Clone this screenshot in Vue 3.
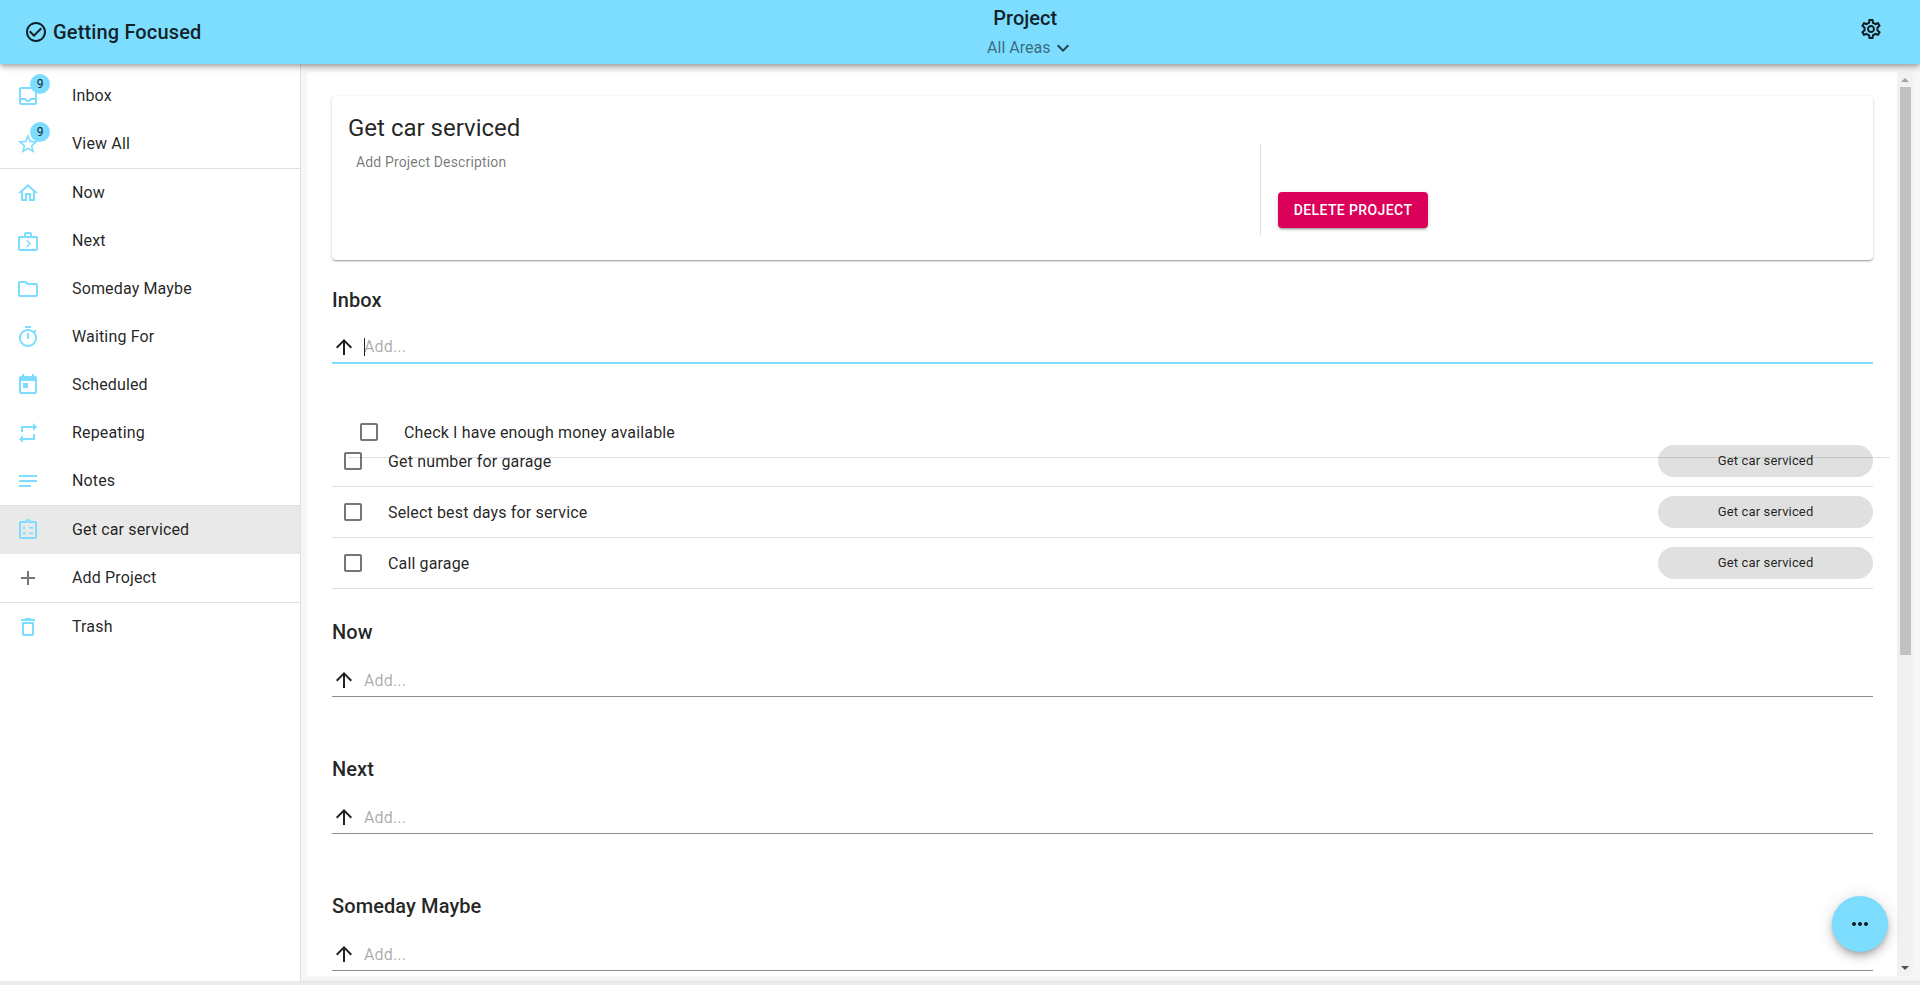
<script setup>
const navTop = [
  { label: 'Inbox', badge: 9, icon: 'M19 3H5c-1.1 0-2 .9-2 2v14c0 1.1.9 2 2 2h14c1.1 0 2-.9 2-2V5c0-1.1-.9-2-2-2zm0 16H5v-3h3.56c.69 1.19 1.97 2 3.45 2s2.75-.81 3.44-2H19v3zm0-5h-4.99c0 1.1-.9 2-2 2s-2-.9-2-2H5V5h14v9z' },
  { label: 'View All', badge: 9, icon: 'M22 9.24l-7.19-.62L12 2 9.19 8.63 2 9.24l5.46 4.73L5.82 21 12 17.27 18.18 21l-1.63-7.03L22 9.24zM12 15.4l-3.76 2.27 1-4.28-3.32-2.88 4.38-.38L12 6.1l1.71 4.04 4.38.38-3.32 2.88 1 4.28L12 15.4z' },
]
const navMid = [
  { label: 'Now', icon: 'M12 5.69l5 4.5V18h-2v-6H9v6H7v-7.81l5-4.5M12 3L2 12h3v8h6v-6h2v6h6v-8h3L12 3z' },
  { label: 'Next', icon: 'M20 7h-4V5c0-.55-.22-1.05-.59-1.41C15.05 3.22 14.55 3 14 3h-4c-1.1 0-2 .9-2 2v2H4c-1.1 0-2 .9-2 2v11c0 1.1.9 2 2 2h16c1.1 0 2-.9 2-2V9c0-1.1-.9-2-2-2zM10 5h4v2h-4V5zm10 15H4V9h16v11zM11 18.5l4-4-4-4-1 1 3 3-3 3z' },
  { label: 'Someday Maybe', icon: 'M9.17 6l2 2H20v10H4V6h5.17M10 4H4c-1.1 0-1.99.9-1.99 2L2 18c0 1.1.9 2 2 2h16c1.1 0 2-.9 2-2V8c0-1.1-.9-2-2-2h-8l-2-2z' },
  { label: 'Waiting For', icon: 'M15 1H9v2h6V1zm-4 13h2V8h-2v6zm8.03-6.61l1.42-1.42c-.43-.51-.9-.99-1.41-1.41l-1.42 1.42C16.07 4.74 14.12 4 12 4c-4.97 0-9 4.03-9 9s4.02 9 9 9 9-4.03 9-9c0-2.12-.74-4.07-1.97-5.61zM12 20c-3.87 0-7-3.13-7-7s3.13-7 7-7 7 3.13 7 7-3.13 7-7 7z' },
  { label: 'Scheduled', icon: 'M19 3h-1V1h-2v2H8V1H6v2H5c-1.11 0-1.99.9-1.99 2L3 19c0 1.1.89 2 2 2h14c1.1 0 2-.9 2-2V5c0-1.1-.9-2-2-2zm0 16H5V8h14v11zM7 10h5v5H7z' },
  { label: 'Repeating', icon: 'M7 7h10v3l4-4-4-4v3H5v6h2V7zm10 10H7v-3l-4 4 4 4v-3h12v-6h-2v4z' },
  { label: 'Notes', icon: 'M3 18h12v-2H3v2zM3 6v2h18V6H3zm0 7h18v-2H3v2z' },
]
const clipboard = 'M19 3h-4.18C14.4 1.84 13.3 1 12 1s-2.4.84-2.82 2H5c-1.1 0-2 .9-2 2v14c0 1.1.9 2 2 2h14c1.1 0 2-.9 2-2V5c0-1.1-.9-2-2-2zm-7-.25c.41 0 .75.34.75.75s-.34.75-.75.75-.75-.34-.75-.75.34-.75.75-.75zM19 19H5V5h14v14zM13 9h4v1.5h-4zM13 14.5h4V16h-4zM7.5 8h1.2v3.5H7.5zM7 14h2.6v.9H8v.6h1.6v.9H7z'
const addIcon = 'M19 13h-6v6h-2v-6H5v-2h6V5h2v6h6v2z'
const trashIcon = 'M6 19c0 1.1.9 2 2 2h8c1.1 0 2-.9 2-2V7H6v12zM8 9h8v10H8V9zm7.5-5l-1-1h-5l-1 1H5v2h14V4z'
const checkbox = 'M19 5v14H5V5h14m0-2H5c-1.1 0-2 .9-2 2v14c0 1.1.9 2 2 2h14c1.1 0 2-.9 2-2V5c0-1.1-.9-2-2-2z'
const arrowUp = 'M4 12l1.41 1.41L11 7.83V20h2V7.83l5.58 5.59L20 12l-8-8-8 8z'
const tasks = ['Get number for garage', 'Select best days for service', 'Call garage']
const otherSections = ['Now', 'Next', 'Someday Maybe']
</script>

<template>
  <div class="app">
    <header class="topbar">
      <div class="brand">
        <svg class="brand-icon" viewBox="0 0 24 24"><path d="M16.59 7.58L10 14.17l-3.59-3.58L5 12l5 5 8-8zM12 2C6.48 2 2 6.48 2 12s4.48 10 10 10 10-4.48 10-10S17.52 2 12 2zm0 18c-4.42 0-8-3.58-8-8s3.58-8 8-8 8 3.58 8 8-3.58 8-8 8z" /></svg>
        <span>Getting Focused</span>
      </div>
      <div class="title-block">
        <div class="page-title">Project</div>
        <div class="area">All Areas<svg viewBox="0 0 24 24"><path d="M16.59 8.59L12 13.17 7.41 8.59 6 10l6 6 6-6z" /></svg></div>
      </div>
      <svg class="gear" viewBox="0 0 24 24"><path d="M19.43 12.98c.04-.32.07-.64.07-.98 0-.34-.03-.66-.07-.98l2.11-1.65c.19-.15.24-.42.12-.64l-2-3.46c-.09-.16-.26-.25-.44-.25-.06 0-.12.01-.17.03l-2.49 1c-.52-.4-1.08-.73-1.69-.98l-.38-2.65C14.46 2.18 14.25 2 14 2h-4c-.25 0-.46.18-.49.42l-.38 2.65c-.61.25-1.17.59-1.69.98l-2.49-1c-.06-.02-.12-.03-.18-.03-.17 0-.34.09-.43.25l-2 3.46c-.13.22-.07.49.12.64l2.11 1.65c-.04.32-.07.65-.07.98 0 .33.03.66.07.98l-2.11 1.65c-.19.15-.24.42-.12.64l2 3.46c.09.16.26.25.44.25.06 0 .12-.01.17-.03l2.49-1c.52.4 1.08.73 1.69.98l.38 2.65c.03.24.24.42.49.42h4c.25 0 .46-.18.49-.42l.38-2.65c.61-.25 1.17-.59 1.69-.98l2.49 1c.06.02.12.03.18.03.17 0 .34-.09.43-.25l2-3.46c.12-.22.07-.49-.12-.64l-2.11-1.65zm-1.98-1.71c.04.31.05.52.05.73 0 .21-.02.43-.05.73l-.14 1.13.89.7 1.08.84-.7 1.21-1.27-.51-1.04-.42-.9.68c-.43.32-.84.56-1.25.73l-1.06.43-.16 1.13-.2 1.35h-1.4l-.19-1.35-.16-1.13-1.06-.43c-.43-.18-.83-.41-1.23-.71l-.91-.7-1.06.43-1.27.51-.7-1.21 1.08-.84.89-.7-.14-1.13c-.03-.31-.05-.54-.05-.74s.02-.43.05-.73l.14-1.13-.89-.7-1.08-.84.7-1.21 1.27.51 1.04.42.9-.68c.43-.32.84-.56 1.25-.73l1.06-.43.16-1.13.2-1.35h1.39l.19 1.35.16 1.13 1.06.43c.43.18.83.41 1.23.71l.91.7 1.06-.43 1.27-.51.7 1.21-1.07.85-.89.7.14 1.13zM12 8c-2.21 0-4 1.79-4 4s1.79 4 4 4 4-1.79 4-4-1.79-4-4-4zm0 6c-1.1 0-2-.9-2-2s.9-2 2-2 2 .9 2 2-.9 2-2 2z" /></svg>
    </header>

    <div class="body">
      <aside class="sidebar">
        <nav class="nav-group">
          <div v-for="item in navTop" :key="item.label" class="nav-item">
            <span class="nav-icon">
              <svg viewBox="0 0 24 24"><path :d="item.icon" /></svg>
              <span class="badge">{{ item.badge }}</span>
            </span>
            <span class="nav-label">{{ item.label }}</span>
          </div>
        </nav>
        <nav class="nav-group">
          <div v-for="item in navMid" :key="item.label" class="nav-item">
            <span class="nav-icon"><svg viewBox="0 0 24 24"><path :d="item.icon" /></svg></span>
            <span class="nav-label">{{ item.label }}</span>
          </div>
        </nav>
        <nav class="nav-group">
          <div class="nav-item selected">
            <span class="nav-icon"><svg viewBox="0 0 24 24"><path :d="clipboard" /></svg></span>
            <span class="nav-label">Get car serviced</span>
          </div>
          <div class="nav-item">
            <span class="nav-icon grey"><svg viewBox="0 0 24 24"><path :d="addIcon" /></svg></span>
            <span class="nav-label">Add Project</span>
          </div>
        </nav>
        <nav class="nav-group">
          <div class="nav-item">
            <span class="nav-icon"><svg viewBox="0 0 24 24"><path :d="trashIcon" /></svg></span>
            <span class="nav-label">Trash</span>
          </div>
        </nav>
      </aside>

      <main class="panel">
        <div class="content">
          <section class="card">
            <div class="card-left">
              <h1>Get car serviced</h1>
              <p>Add Project Description</p>
            </div>
            <div class="card-right">
              <button class="delete">DELETE PROJECT</button>
            </div>
          </section>

          <section class="section inbox">
            <h2>Inbox</h2>
            <div class="add-row focused">
              <svg viewBox="0 0 24 24"><path :d="arrowUp" /></svg>
              <span class="caret"></span><span class="placeholder">Add...</span>
            </div>
            <div class="subtask">
              <svg viewBox="0 0 24 24"><path :d="checkbox" /></svg>
              <span>Check I have enough money available</span>
            </div>
            <div v-for="task in tasks" :key="task" class="task">
              <svg viewBox="0 0 24 24"><path :d="checkbox" /></svg>
              <span class="task-text">{{ task }}</span>
              <span class="chip">Get car serviced</span>
            </div>
          </section>

          <section v-for="name in otherSections" :key="name" class="section">
            <h2>{{ name }}</h2>
            <div class="add-row">
              <svg viewBox="0 0 24 24"><path :d="arrowUp" /></svg>
              <span class="placeholder">Add...</span>
            </div>
          </section>
        </div>
        <div class="scrollbar">
          <span class="tri up"></span>
          <div class="thumb"></div>
          <span class="tri down"></span>
        </div>
      </main>
    </div>
    <div class="bottom-edge"></div>

    <button class="fab">
      <svg viewBox="0 0 24 24"><path d="M6 10c-1.1 0-2 .9-2 2s.9 2 2 2 2-.9 2-2-.9-2-2-2zm12 0c-1.1 0-2 .9-2 2s.9 2 2 2 2-.9 2-2-.9-2-2-2zm-6 0c-1.1 0-2 .9-2 2s.9 2 2 2 2-.9 2-2-.9-2-2-2z" /></svg>
    </button>
  </div>
</template>

<style scoped>
.app {
  position: relative;
  display: flex;
  flex-direction: column;
  width: 1920px;
  height: 985px;
  overflow: hidden;
  background: #f6f6f6;
  font-family: Roboto, "Liberation Sans", sans-serif;
  letter-spacing: .15px;
  color: rgba(0, 0, 0, 0.87);
}
.topbar {
  position: relative;
  z-index: 3;
  flex: none;
  display: flex;
  align-items: center;
  height: 64px;
  padding: 0 37px 0 24px;
  box-sizing: border-box;
  background: #7cddff;
  box-shadow: 0 2px 4px -1px rgba(0,0,0,.2), 0 4px 5px rgba(0,0,0,.14), 0 1px 10px rgba(0,0,0,.12);
}
.brand {
  display: flex;
  align-items: center;
  gap: 5px;
  font-size: 20px;
  font-weight: 500;
}
.brand-icon { width: 24px; height: 24px; fill: rgba(0,0,0,.87); }
.title-block { flex: 1; margin-right: 10px; text-align: center; letter-spacing: 0; }
.page-title { font-size: 20px; font-weight: 500; line-height: 24px; margin-top: 1px; }
.area {
  display: flex;
  align-items: center;
  justify-content: center;
  font-size: 16px;
  line-height: 24px;
  margin-top: 6px;
  color: rgba(0,0,0,.54);
}
.area svg { width: 24px; height: 24px; margin: 0 -12px 0 1px; fill: rgba(0,0,0,.7); }
.gear { flex: none; width: 24px; height: 24px; margin-top: -7px; fill: rgba(0,0,0,.87); }

.body { flex: none; height: 918px; display: flex; }
.bottom-edge {
  position: relative;
  z-index: 1;
  flex: none;
  height: 3px;
  background: #ececec;
  box-shadow: 0 -1px 1px rgba(0,0,0,.08);
}
.sidebar {
  flex: none;
  width: 301px;
  box-sizing: border-box;
  height: 100%;
  padding-top: 8px;
  background: #fff;
  border-right: 1px solid #e0e0e0;
  font-size: 16px;
}
.nav-group + .nav-group { border-top: 1px solid #e0e0e0; }
.nav-item {
  display: flex;
  align-items: center;
  height: 48px;
  padding-left: 16px;
}
.nav-label { margin-bottom: 2px; }
.selected { background: #e9e9e9; }
.nav-icon { position: relative; width: 24px; height: 24px; margin-right: 32px; }
.nav-icon svg { display: block; width: 24px; height: 24px; fill: #7cddff; }
.nav-icon.grey svg { fill: #757575; }
.badge {
  position: absolute;
  left: 14px;
  top: -10px;
  width: 20px;
  height: 20px;
  border-radius: 50%;
  background: #7cddff;
  font-size: 12px;
  line-height: 20px;
  text-align: center;
  letter-spacing: 0;
}

.panel {
  flex: none;
  display: flex;
  width: 1606px;
  height: 904px;
  margin: 8px 0 0 6px;
  background: #fff;
  border-radius: 4px;
  overflow: hidden;
}
.content {
  flex: none;
  width: 1590px;
  box-sizing: border-box;
  padding: 24px 24px 0 25px;
  height: 100%;
  overflow: hidden;
}
.card {
  display: flex;
  height: 164px;
  border-radius: 4px;
  background: #fff;
  box-shadow: 0 1px 3px rgba(0,0,0,.2), 0 1px 1px rgba(0,0,0,.14), 0 2px 1px -1px rgba(0,0,0,.12);
}
.card-left { width: 928px; padding: 16px 0 0 16px; box-sizing: border-box; }
.card-left h1 { margin: 0; font-size: 24px; font-weight: 400; line-height: 32px; letter-spacing: 0; }
.card-left p { margin: 8px 0 0 8px; font-size: 14px; line-height: 20px; color: rgba(0,0,0,.54); }
.card-right {
  align-self: flex-start;
  margin-top: 48px;
  height: 92px;
  border-left: 1px solid #e0e0e0;
  padding: 48px 0 0 17px;
  box-sizing: border-box;
}
.delete {
  display: block;
  width: 150px;
  height: 36px;
  border: 0;
  padding: 0;
  border-radius: 4px;
  background: #db0059;
  color: #fff;
  font: 500 14px/36px Roboto, sans-serif;
  letter-spacing: .4px;
  box-shadow: 0 3px 1px -2px rgba(0,0,0,.2), 0 2px 2px rgba(0,0,0,.14), 0 1px 5px rgba(0,0,0,.12);
}

.section { margin-top: 60px; }
.section.inbox { margin-top: 28px; }
.inbox + .section { margin-top: 31px; }
.section h2 { margin: 0; font-size: 20px; font-weight: 500; line-height: 24px; letter-spacing: .1px; }
.add-row {
  display: flex;
  align-items: center;
  height: 32px;
  margin-top: 20px;
  border-bottom: 1px solid #8c8c8c;
  font-size: 16px;
}
.add-row.focused { margin-top: 19px; height: 31px; border-bottom: 2px solid #7cddff; }
.add-row svg { flex: none; width: 24px; height: 24px; margin-right: 8px; fill: rgba(0,0,0,.87); }
.caret { width: 1px; height: 18px; margin-right: -1px; background: #222; }
.placeholder { color: rgba(0,0,0,.34); }

.subtask {
  position: relative;
  z-index: 1;
  display: flex;
  align-items: center;
  height: 50px;
  margin: 43px -17px 0 16px;
  padding-left: 9px;
  border-bottom: 1px solid rgba(0,0,0,.12);
  font-size: 16px;
}
.subtask svg, .task svg { flex: none; width: 24px; height: 24px; margin-right: 23px; fill: #757575; }
.task {
  display: flex;
  align-items: center;
  height: 50px;
  padding-left: 9px;
  border-bottom: 1px solid #e0e0e0;
  font-size: 16px;
}
.subtask + .task { margin-top: -22px; }
.task-text { flex: 1; }
.chip {
  width: 215px;
  height: 32px;
  border-radius: 16px;
  background: #e0e0e0;
  font-size: 13px;
  line-height: 32px;
  text-align: center;
}

.scrollbar {
  flex: none;
  width: 16px;
  height: 100%;
  background: #f1f1f1;
  display: flex;
  flex-direction: column;
  align-items: center;
}
.thumb { width: 11px; height: 568px; background: #c1c1c1; margin-top: 5px; }
.tri { width: 0; height: 0; border-left: 4px solid transparent; border-right: 4px solid transparent; }
.tri.up { border-bottom: 4px solid #a3a3a3; margin-top: 6px; }
.tri.down { border-top: 4px solid #505050; margin-top: auto; margin-bottom: 6px; }

.fab {
  position: absolute;
  left: 1832px;
  top: 896px;
  z-index: 4;
  display: flex;
  align-items: center;
  justify-content: center;
  width: 56px;
  height: 56px;
  padding: 0;
  border: 0;
  border-radius: 50%;
  background: #7cddff;
  box-shadow: 0 3px 5px -1px rgba(0,0,0,.2), 0 6px 10px rgba(0,0,0,.14), 0 1px 18px rgba(0,0,0,.12);
}
.fab svg { width: 24px; height: 24px; fill: rgba(0,0,0,.87); }
</style>
